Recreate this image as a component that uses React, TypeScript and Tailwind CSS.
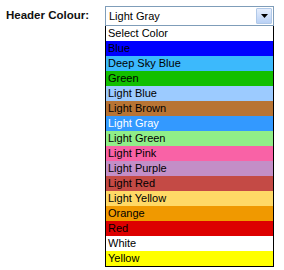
import React from 'react';

const colours = [
  { name: 'Select Color', bg: 'bg-white', text: 'text-black' },
  { name: 'Blue', bg: 'bg-[#0000ff]', text: 'text-black' },
  { name: 'Deep Sky Blue', bg: 'bg-[#3cb9fc]', text: 'text-black' },
  { name: 'Green', bg: 'bg-[#12bf00]', text: 'text-black' },
  { name: 'Light Blue', bg: 'bg-[#9ccbff]', text: 'text-black' },
  { name: 'Light Brown', bg: 'bg-[#b87434]', text: 'text-black' },
  { name: 'Light Gray', bg: 'bg-[#3399ff]', text: 'text-white' },
  { name: 'Light Green', bg: 'bg-[#90ee88]', text: 'text-black' },
  { name: 'Light Pink', bg: 'bg-[#f962a6]', text: 'text-black' },
  { name: 'Light Purple', bg: 'bg-[#c38ec7]', text: 'text-black' },
  { name: 'Light Red', bg: 'bg-[#c44a45]', text: 'text-black' },
  { name: 'Light Yellow', bg: 'bg-[#ffd966]', text: 'text-black' },
  { name: 'Orange', bg: 'bg-[#f09900]', text: 'text-black' },
  { name: 'Red', bg: 'bg-[#dd0000]', text: 'text-black' },
  { name: 'White', bg: 'bg-white', text: 'text-black' },
  { name: 'Yellow', bg: 'bg-[#ffff00]', text: 'text-black' },
];

const App: React.FC = () => {
  return (
    <div className="w-[284px] h-[270px] bg-white font-['Liberation_Sans',sans-serif] text-[11px] text-black">
      <div className="flex pt-[6px]">
        {/* Label */}
        <div className="w-[105px] pl-[6px] h-[20px] flex items-center font-bold text-[11.5px] text-[#111]">
          Header Colour:
        </div>

        {/* Select + open list */}
        <div className="w-[169px] flex flex-col">
          <div className="h-[20px] flex border border-[#7f9db9] bg-white">
            <span className="flex-1 pl-[3px] leading-[18px] text-[11px]">Light Gray</span>
            <div className="w-[16px] h-[16px] m-px flex items-center justify-center border border-[#b1c9e8] bg-gradient-to-b from-[#e6eefc] to-[#b9d1f5] rounded-[1px]">
              <svg width="7" height="4" viewBox="0 0 7 4">
                <path d="M0 0h7L3.5 4z" fill="#000" />
              </svg>
            </div>
          </div>

          <ul className="border border-black border-t-0">
            {colours.map((c) => (
              <li key={c.name} className={`h-[15px] leading-[15px] pl-[2px] text-[11px] ${c.bg} ${c.text}`}>
                {c.name}
              </li>
            ))}
          </ul>
        </div>
      </div>
    </div>
  );
};

export default App;
